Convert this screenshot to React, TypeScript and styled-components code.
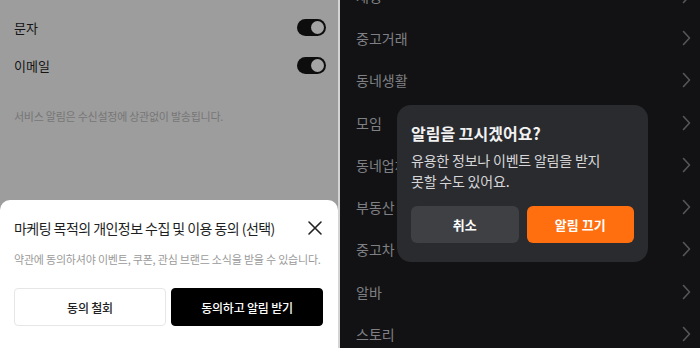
import styled, { createGlobalStyle } from 'styled-components';

const GlobalStyle = createGlobalStyle`
  html, body {
    margin: 0;
    padding: 0;
    background: #d4d4d4;
    font-family: "Noto Sans CJK KR", "Noto Sans", sans-serif;
  }
`;

const menuItems = ['채팅', '중고거래', '동네생활', '모임', '동네업체', '부동산', '중고차', '알바', '스토리'];

function Toggle() {
  return (
    <ToggleTrack>
      <ToggleKnob />
    </ToggleTrack>
  );
}

function Chevron() {
  return (
    <svg width="9" height="16" viewBox="0 0 9 16" fill="none">
      <path d="M1.5 1.5L7.5 8L1.5 14.5" stroke="#55565a" strokeWidth="1.6" strokeLinecap="round" strokeLinejoin="round" />
    </svg>
  );
}

function CloseIcon() {
  return (
    <svg width="16" height="16" viewBox="0 0 16 16" fill="none">
      <path d="M2 2L14 14M14 2L2 14" stroke="#222" strokeWidth="1.6" strokeLinecap="round" />
    </svg>
  );
}

function App() {
  return (
    <>
      <GlobalStyle />
      <Screen>
        <LightPanel>
          <SettingRow>
            <SettingLabel>문자</SettingLabel>
            <Toggle />
          </SettingRow>
          <SettingRow>
            <SettingLabel>이메일</SettingLabel>
            <Toggle />
          </SettingRow>
          <Notice>서비스 알림은 수신설정에 상관없이 발송됩니다.</Notice>
          <Sheet>
            <SheetHeader>
              <SheetTitle>마케팅 목적의 개인정보 수집 및 이용 동의 (선택)</SheetTitle>
              <CloseIcon />
            </SheetHeader>
            <SheetText>약관에 동의하셔야 이벤트, 쿠폰, 관심 브랜드 소식을 받을 수 있습니다.</SheetText>
            <SheetButtons>
              <SheetButton>동의 철회</SheetButton>
              <SheetButton $primary>동의하고 알림 받기</SheetButton>
            </SheetButtons>
          </Sheet>
        </LightPanel>

        <DarkPanel>
          <MenuList>
            {menuItems.map((item) => (
              <MenuRow key={item}>
                <MenuLabel>{item}</MenuLabel>
                <Chevron />
              </MenuRow>
            ))}
          </MenuList>
          <Dialog>
            <DialogTitle>알림을 끄시겠어요?</DialogTitle>
            <DialogText>
              유용한 정보나 이벤트 알림을 받지
              <br />
              못할 수도 있어요.
            </DialogText>
            <DialogButtons>
              <DialogButton>취소</DialogButton>
              <DialogButton $accent>알림 끄기</DialogButton>
            </DialogButtons>
          </Dialog>
        </DarkPanel>
      </Screen>
    </>
  );
}

const Screen = styled.div`
  display: flex;
  gap: 2px;
  width: 700px;
  height: 348px;
  overflow: hidden;
`;

const LightPanel = styled.div`
  width: 338px;
  flex-shrink: 0;
  display: flex;
  flex-direction: column;
  background-color: #9d9d9d;
  padding-top: 8px;
  box-sizing: border-box;
`;

const SettingRow = styled.div`
  display: flex;
  align-items: center;
  justify-content: space-between;
  height: 38px;
  padding: 0 12px 0 14px;
`;

const SettingLabel = styled.div`
  font-size: 13px;
  color: #151515;
`;

const ToggleTrack = styled.div`
  display: flex;
  align-items: center;
  justify-content: flex-end;
  width: 29px;
  height: 17px;
  border-radius: 9px;
  background-color: #0d0d0d;
  padding: 0 2px;
  box-sizing: border-box;
`;

const ToggleKnob = styled.div`
  width: 13px;
  height: 13px;
  border-radius: 50%;
  background-color: #a4a4a4;
`;

const Notice = styled.div`
  margin-top: 24px;
  padding-left: 14px;
  font-size: 11px;
  letter-spacing: -0.25px;
  color: #767676;
`;

const Sheet = styled.div`
  margin-top: auto;
  height: 148px;
  background-color: #ffffff;
  border-radius: 10px 10px 0 0;
  padding: 18px 15px 0 14px;
  box-sizing: border-box;
`;

const SheetHeader = styled.div`
  display: flex;
  align-items: center;
  justify-content: space-between;
  height: 20px;
`;

const SheetTitle = styled.div`
  font-size: 14px;
  color: #1e1e1e;
  letter-spacing: -0.55px;
`;

const SheetText = styled.div`
  margin-top: 13px;
  font-size: 11px;
  color: #9a9a9a;
  letter-spacing: -0.2px;
  white-space: nowrap;
`;

const SheetButtons = styled.div`
  display: grid;
  grid-template-columns: 1fr 1fr;
  gap: 5px;
  margin-top: 21px;
`;

const SheetButton = styled.div<{ $primary?: boolean }>`
  display: flex;
  align-items: center;
  justify-content: center;
  height: 38px;
  border-radius: 4px;
  box-sizing: border-box;
  font-size: 12px;
  font-weight: 500;
  letter-spacing: -0.2px;
  border: 1px solid ${(p) => (p.$primary ? '#000' : '#e6e6e6')};
  background-color: ${(p) => (p.$primary ? '#000' : '#fff')};
  color: ${(p) => (p.$primary ? '#fff' : '#222')};
`;

const DarkPanel = styled.div`
  position: relative;
  flex: 1;
  background-color: #121214;
  overflow: hidden;
`;

const MenuList = styled.div`
  margin-top: -25.5px;
  padding: 0 9px 0 16px;
`;

const MenuRow = styled.div`
  display: flex;
  align-items: center;
  justify-content: space-between;
  height: 42.3px;
`;

const MenuLabel = styled.div`
  font-size: 14px;
  color: #7f8084;
`;

const Dialog = styled.div`
  position: absolute;
  left: 57px;
  top: 105px;
  width: 251px;
  height: 157px;
  box-sizing: border-box;
  padding: 16px 14px 0 14px;
  border-radius: 14px;
  background-color: #2a2b2f;
`;

const DialogTitle = styled.div`
  font-size: 16px;
  font-weight: 700;
  color: #f2f2f2;
  line-height: 24px;
`;

const DialogText = styled.div`
  margin-top: 5px;
  font-size: 14px;
  line-height: 21px;
  letter-spacing: -0.2px;
  color: #d6d6d8;
`;

const DialogButtons = styled.div`
  display: grid;
  grid-template-columns: 1fr 1fr;
  gap: 8px;
  margin-top: 14px;
`;

const DialogButton = styled.div<{ $accent?: boolean }>`
  display: flex;
  align-items: center;
  justify-content: center;
  height: 37px;
  border-radius: 6px;
  font-size: 13px;
  font-weight: 700;
  color: #ffffff;
  background-color: ${(p) => (p.$accent ? '#ff6f0f' : '#3e4044')};
`;

export default App;
